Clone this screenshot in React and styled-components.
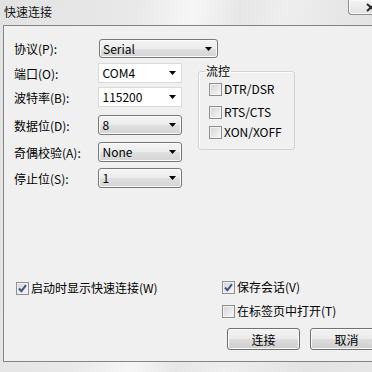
import styled, { createGlobalStyle } from 'styled-components';

const GlobalStyle = createGlobalStyle`
    html, body {
        margin: 0;
        padding: 0;
    }
    body {
        width: 372px;
        height: 372px;
        overflow: hidden;
        background: #e4e4e4;
        font-family: "Noto Sans CJK SC", "Liberation Sans", sans-serif;
        font-size: 12px;
        color: #000;
    }
`;

const ArrowIcon = () => (
    <svg width="7" height="4" viewBox="0 0 7 4">
        <polygon points="0,0 7,0 3.5,4" fill="#000" />
    </svg>
);

const CheckIcon = () => (
    <svg width="11" height="11" viewBox="0 0 11 11">
        <path
            d="M2 5.5 L4.4 8.2 L9 2.2"
            fill="none"
            stroke="#3f5384"
            strokeWidth="1.9"
        />
    </svg>
);

const Checkbox = ({ checked, children }) => (
    <CheckRow>
        <CheckBox>{checked && <CheckIcon />}</CheckBox>
        <span>{children}</span>
    </CheckRow>
);

const Combo = ({ value, width, editable }) => (
    <ComboBox $width={width} $editable={editable}>
        <span>{value}</span>
        <ArrowIcon />
    </ComboBox>
);

const App = () => {
    return (
        <>
            <GlobalStyle />
            <Window>
                <TitleBar>
                    <Title>快速连接</Title>
                    <CloseButton>
                        <svg width="10" height="9" viewBox="0 0 10 9">
                            <path
                                d="M1 1 L9 8 M9 1 L1 8"
                                stroke="#2a2a2a"
                                strokeWidth="2"
                            />
                        </svg>
                    </CloseButton>
                </TitleBar>
                <Frame>
                    <Content>
                        <Row $mt={0} $h={19}>
                            <Label>协议(P):</Label>
                            <Combo value="Serial" width={119} />
                        </Row>
                        <TopArea>
                            <FormColumn>
                                <Row $mt={5}>
                                    <Label>端口(O):</Label>
                                    <Combo value="COM4" width={84} editable />
                                </Row>
                                <Row $mt={4}>
                                    <Label>波特率(B):</Label>
                                    <Combo value="115200" width={84} editable />
                                </Row>
                                <Row $mt={8}>
                                    <Label>数据位(D):</Label>
                                    <Combo value="8" width={84} />
                                </Row>
                                <Row $mt={7}>
                                    <Label>奇偶校验(A):</Label>
                                    <Combo value="None" width={84} />
                                </Row>
                                <Row $mt={6}>
                                    <Label>停止位(S):</Label>
                                    <Combo value="1" width={84} />
                                </Row>
                            </FormColumn>
                            <Group>
                                <GroupTitle>流控</GroupTitle>
                                <GroupItem $mt={3}>
                                    <Checkbox>DTR/DSR</Checkbox>
                                </GroupItem>
                                <GroupItem $mt={7}>
                                    <Checkbox>RTS/CTS</Checkbox>
                                </GroupItem>
                                <GroupItem $mt={4}>
                                    <Checkbox>XON/XOFF</Checkbox>
                                </GroupItem>
                            </Group>
                        </TopArea>
                        <BottomArea>
                            <BottomLeft>
                                <Checkbox checked>启动时显示快速连接(W)</Checkbox>
                            </BottomLeft>
                            <BottomRight>
                                <Checkbox checked>保存会话(V)</Checkbox>
                                <GroupItem $mt={8}>
                                    <Checkbox>在标签页中打开(T)</Checkbox>
                                </GroupItem>
                                <ButtonRow>
                                    <Button>连接</Button>
                                    <Button>取消</Button>
                                </ButtonRow>
                            </BottomRight>
                        </BottomArea>
                    </Content>
                </Frame>
            </Window>
        </>
    );
};

const Window = styled.div`
    width: 400px;
    height: 372px;
    display: flex;
    flex-direction: column;
    background: linear-gradient(
        100deg,
        #e2e2e2 0%,
        #e9e9e9 30%,
        #f6f6f6 42%,
        #e6e6e6 52%,
        #eeeeee 62%,
        #e3e3e3 80%,
        #e8e8e8 100%
    );
`;

const TitleBar = styled.div`
    height: 25px;
    display: flex;
    justify-content: space-between;
    align-items: flex-start;
    padding-left: 4px;
    padding-right: 6px;
`;

const Title = styled.div`
    line-height: 24px;
    font-size: 12px;
    color: #111;
`;

const CloseButton = styled.div`
    width: 46px;
    height: 15px;
    box-sizing: border-box;
    border: 1px solid #8e8e8e;
    border-top: none;
    border-radius: 0 0 4px 4px;
    background: linear-gradient(#f4f4f4, #e2e2e2);
    box-shadow: inset 0 0 0 1px #fafafa;
    display: flex;
    align-items: center;
    justify-content: center;
`;

const Frame = styled.div`
    flex: 1;
    display: flex;
    padding: 0 0 10px 3px;
`;

const Content = styled.div`
    flex: 1;
    display: flex;
    flex-direction: column;
    background: #f0f0f0;
    border: 1px solid #848484;
    border-right: none;
    padding: 13px 0 11px 10px;
`;

const Row = styled.div`
    display: flex;
    align-items: center;
    height: ${(p) => p.$h || 20}px;
    margin-top: ${(p) => p.$mt}px;
`;

const Label = styled.div`
    width: 85px;
    white-space: nowrap;
`;

const ComboBox = styled.div`
    width: ${(p) => p.$width}px;
    height: 100%;
    box-sizing: border-box;
    display: flex;
    align-items: center;
    justify-content: space-between;
    padding: 0 5px 0 3px;
    border: 1px solid ${(p) => (p.$editable ? '#d9d9d9' : '#777777')};
    border-radius: ${(p) => (p.$editable ? '0' : '3px')};
    background: ${(p) =>
        p.$editable
            ? '#ffffff'
            : 'linear-gradient(#f4f4f4 0%, #ececec 50%, #e0e0e0 51%, #d4d4d4 100%)'};
    box-shadow: ${(p) => (p.$editable ? 'none' : 'inset 0 0 0 1px #fbfbfb')};
    line-height: 16px;
`;

const TopArea = styled.div`
    display: flex;
    align-items: flex-start;
`;

const FormColumn = styled.div`
    display: flex;
    flex-direction: column;
    width: 168px;
`;

const Group = styled.fieldset`
    margin: 6px 0 0 16px;
    padding: 0 10px;
    width: 97px;
    height: 86px;
    box-sizing: border-box;
    min-width: 0;
    border: 1px solid #d3d3d3;
    border-radius: 3px;
    box-shadow: 1px 1px 0 #fcfcfc inset;
`;

const GroupTitle = styled.legend`
    padding: 0 1px;
    margin-left: -4px;
    line-height: 14px;
    font-size: 12px;
`;

const GroupItem = styled.div`
    margin-top: ${(p) => p.$mt}px;
`;

const CheckRow = styled.div`
    display: flex;
    align-items: center;
    height: 16px;
    gap: 2px;
    white-space: nowrap;
    line-height: 16px;
`;

const CheckBox = styled.span`
    width: 13px;
    height: 13px;
    box-sizing: border-box;
    flex-shrink: 0;
    border: 1px solid #8e8f8f;
    background: linear-gradient(135deg, #d2d2d2 0%, #e8e8e8 55%, #f8f8f8 100%);
    box-shadow: inset 0 0 0 1px #f2f2f2;
    display: flex;
    align-items: center;
    justify-content: center;
`;

const BottomArea = styled.div`
    margin-top: auto;
    display: flex;
    align-items: flex-start;
`;

const BottomLeft = styled.div`
    width: 206px;
    padding: 1px 0 0 2px;
`;

const BottomRight = styled.div`
    display: flex;
    flex-direction: column;
`;

const ButtonRow = styled.div`
    display: flex;
    gap: 10px;
    margin-top: 9px;
    padding-left: 5px;
`;

const Button = styled.div`
    width: 73px;
    height: 22px;
    box-sizing: border-box;
    border: 1px solid #707070;
    border-radius: 3px;
    background: linear-gradient(#f2f2f2 0%, #ebebeb 50%, #dddddd 51%, #cfcfcf 100%);
    box-shadow: inset 0 0 0 1px #fbfbfb;
    display: flex;
    align-items: center;
    justify-content: center;
    font-size: 12px;
`;

export default App;
